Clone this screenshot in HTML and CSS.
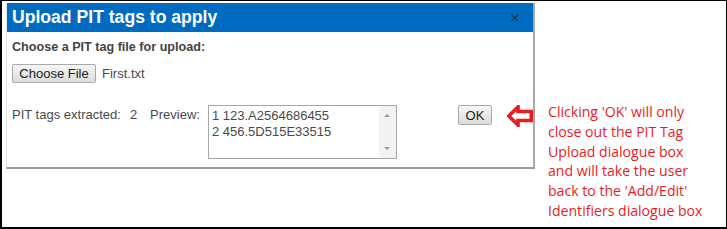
FILE: index.html
```html
<!DOCTYPE html>
<html>
<head>
<meta charset="utf-8">
<link rel="stylesheet" href="styles.css">
</head>
<body>
<div class="frame">
  <div class="dialog">
    <div class="titlebar">
      <span class="title">Upload PIT tags to apply</span>
      <span class="close">&#x2715;</span>
    </div>
    <div class="body">
      <div class="label">Choose a PIT tag file for upload:</div>
      <div class="filerow">
        <button class="btn file-btn">Choose File</button>
        <span class="filename">First.txt</span>
      </div>
      <div class="resultrow">
        <span class="extracted">PIT tags extracted:</span>
        <span class="count">2</span>
        <span class="preview-label">Preview:</span>
        <div class="preview">
          <div class="preview-lines">
            <div>1 123.A2564686455</div>
            <div>2 456.5D515E33515</div>
          </div>
          <div class="scroll">
            <span class="arr up"></span>
            <span class="arr down"></span>
          </div>
        </div>
        <button class="btn ok-btn">OK</button>
      </div>
    </div>
  </div>
  <div class="note">
    <svg class="arrow" width="26" height="22" viewBox="0 0 26 22">
      <path d="M1.8 11 L11 2 L11 6.5 L24.3 6.5 L24.3 15.5 L11 15.5 L11 20 Z" fill="#fff" stroke="#e81c24" stroke-width="3.6" stroke-linejoin="miter"/>
    </svg>
    <p class="note-text">Clicking 'OK' will only<br>close out the PIT Tag<br>Upload dialogue box<br>and will take the user<br>back to the 'Add/Edit'<br>Identifiers dialogue box</p>
  </div>
</div>
</body>
</html>
```
FILE: styles.css
```css
* { box-sizing: border-box; }
html, body { margin: 0; padding: 0; background: #fff; }
.frame {
  position: relative;
  width: 727px;
  height: 229px;
  border: 1px solid #000;
  border-left-width: 2px;
  border-bottom-width: 2px;
  display: flex;
  align-items: flex-start;
  padding: 2px 0 0 4px;
  font-family: "Liberation Sans", Arial, sans-serif;
}
.dialog {
  width: 529px;
  height: 166px;
  border-right: 2px solid #a8a8a8;
  border-bottom: 2px solid #9a9a9a;
  border-left: 1px solid #e4e4e4;
  display: flex;
  flex-direction: column;
}
.titlebar {
  height: 29px;
  background: #006cc1;
  display: flex;
  align-items: center;
  justify-content: space-between;
  padding: 0 12px 0 5px;
}
.title {
  color: #fff;
  font-weight: bold;
  font-size: 17.6px;
}
.close {
  color: #1c3760;
  font-size: 14px;
}
.body {
  padding: 8px 5px 0 5px;
  color: #4a4a4a;
  font-size: 13px;
}
.label {
  font-weight: bold;
  font-size: 12.6px;
  color: #444;
  height: 16px;
}
.filerow {
  margin-top: 8px;
  display: flex;
  align-items: center;
  gap: 6px;
}
.btn {
  font-family: "Liberation Sans", Arial, sans-serif;
  font-size: 13px;
  color: #222;
  background: linear-gradient(#f6f6f6, #dcdcdc);
  border: 1px solid #a9a9a9;
  border-radius: 2px;
  height: 19px;
  padding: 0 6px;
}
.file-btn { width: 84px; }
.filename { color: #4a4a4a; }
.resultrow {
  margin-top: 22px;
  display: flex;
  align-items: flex-start;
}
.extracted { margin-top: 2px; }
.count { margin: 2px 0 0 9px; }
.preview-label { margin: 2px 0 0 13px; }
.preview {
  margin-left: 8px;
  width: 189px;
  height: 54px;
  border: 1px solid #a6a6a6;
  display: flex;
  justify-content: space-between;
}
.preview-lines {
  padding: 2px 0 0 3px;
  line-height: 16px;
  color: #4a4a4a;
}
.scroll {
  width: 17px;
  background: #f2f2f2;
  position: relative;
}
.arr {
  position: absolute;
  left: 5px;
  width: 0;
  height: 0;
  border-left: 3px solid transparent;
  border-right: 3px solid transparent;
}
.arr.up { top: 8px; border-bottom: 3px solid #9a9a9a; }
.arr.down { bottom: 8px; border-top: 3px solid #9a9a9a; }
.ok-btn {
  margin-left: 61px;
  width: 34px;
  height: 20px;
  padding: 0;
  font-size: 13px;
}
.note {
  position: relative;
  flex: 1;
  padding: 99px 0 0 13px;
}
.arrow {
  position: absolute;
  left: -28px;
  top: 102px;
}
.note-text {
  margin: 0;
  color: #e81c24;
  font-family: "Open Sans", sans-serif;
  font-size: 14.1px;
  line-height: 19.8px;
  white-space: nowrap;
}
```
